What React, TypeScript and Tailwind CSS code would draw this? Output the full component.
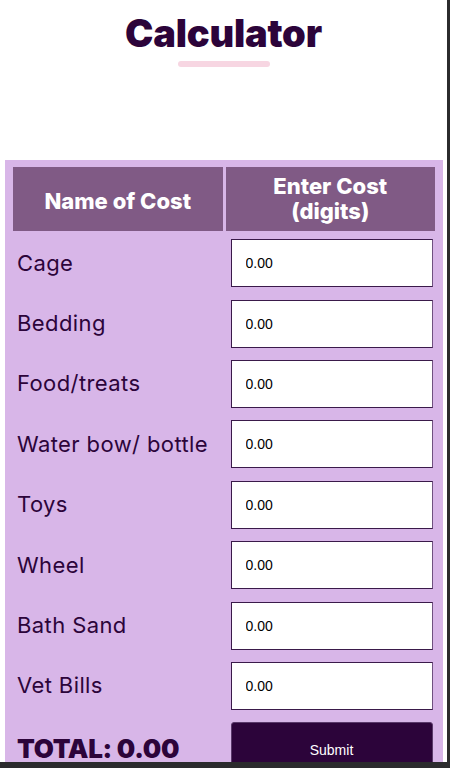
import React from "react";

const items = [
  "Cage",
  "Bedding",
  "Food/treats",
  "Water bow/ bottle",
  "Toys",
  "Wheel",
  "Bath Sand",
  "Vet Bills",
];

export default function App() {
  return (
    <div className="w-[450px] h-[768px] bg-[#2b2b2d] overflow-hidden">
      <div
        className="w-[447px] h-[762px] bg-white overflow-hidden flex flex-col"
        style={{ fontFamily: "Inter, 'Noto Sans', sans-serif" }}
      >
        <div className="h-[160px] flex flex-col items-center shrink-0">
          <h1 className="mt-[11px] text-[38px] leading-[44px] font-black text-[#2c043a] tracking-[-0.2px]">
            Calculator
          </h1>
          <div className="mt-[6px] w-[92px] h-[6px] rounded-full bg-[#f7d6e2]" />
        </div>
        <div className="ml-[5px] w-[438px] bg-[#d8b6e8] pt-[7px] px-[8px] flex-1">
          <div className="grid grid-cols-2 gap-x-[3px]">
            <div className="h-[64px] bg-[#805a85] flex items-center justify-center pt-[3px] text-white font-extrabold text-[22px] leading-[26px]">
              Name of Cost
            </div>
            <div className="h-[64px] bg-[#805a85] flex flex-col items-center justify-center text-white font-extrabold text-[22px] leading-[25px] text-center">
              <span>Enter Cost</span>
              <span>(digits)</span>
            </div>
          </div>
          <div className="mt-[2px] flex flex-col">
            {items.map((name) => (
              <div key={name} className="grid grid-cols-2 gap-x-[3px] h-[60.4px] items-center">
                <div className="pl-[4px] text-[22px] text-[#2c043a] tracking-[0.4px]">{name}</div>
                <div className="pl-[5px]">
                  <input
                    readOnly
                    value="0.00"
                    className="w-[202px] h-[48px] bg-white border-[1.5px] border-[#3a1a4a] border-r-[#6f5080] pl-[14px] text-[14px] text-black outline-none"
                    style={{ fontFamily: "'Liberation Sans', Arial, sans-serif" }}
                  />
                </div>
              </div>
            ))}
            <div className="grid grid-cols-2 gap-x-[3px] pt-[6px]">
              <div className="pl-[4px] pt-[11px] text-[26px] leading-[32px] font-black text-[#2c043a] tracking-[-0.3px]">
                TOTAL: 0.00
              </div>
              <div className="pl-[5px]">
                <button
                  className="w-[202px] h-[56px] bg-[#2c043a] rounded-[3px] border border-[#5a3a6a] text-white text-[14px]"
                  style={{ fontFamily: "'Liberation Sans', Arial, sans-serif" }}
                >
                  Submit
                </button>
              </div>
            </div>
          </div>
        </div>
      </div>
    </div>
  );
}
